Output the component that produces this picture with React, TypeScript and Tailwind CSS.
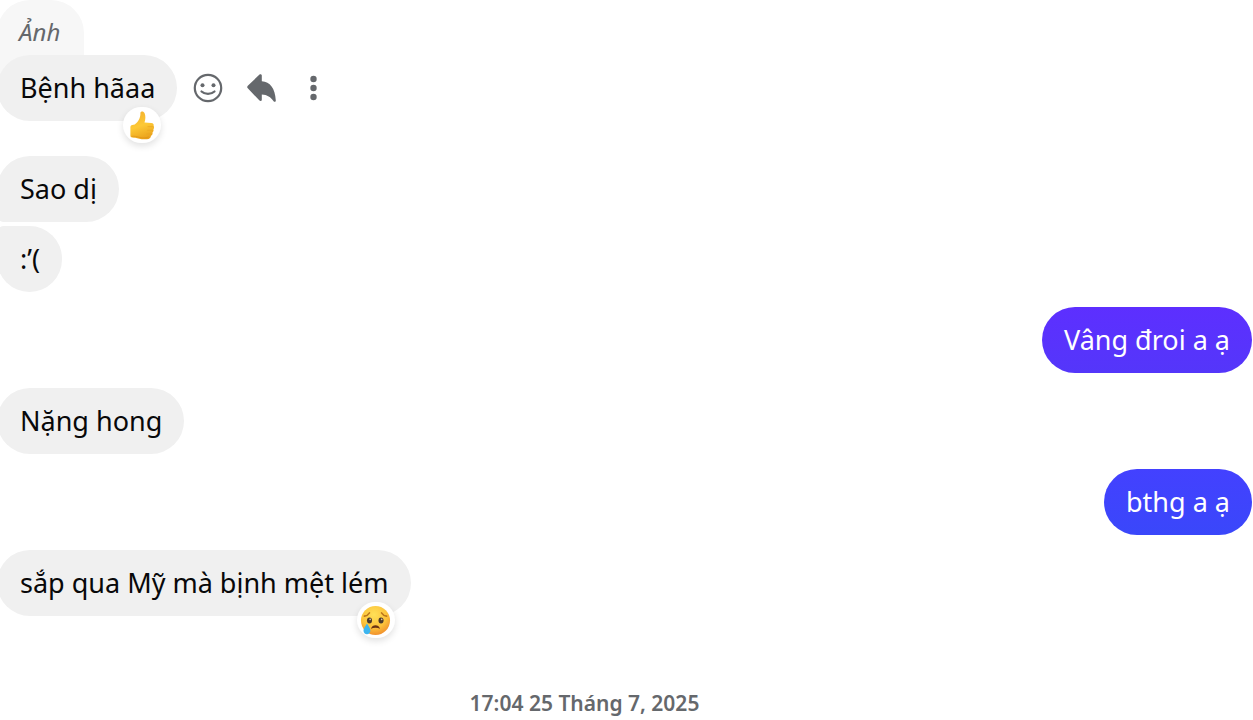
import type { ReactNode } from "react";

type BubbleProps = {
  children: ReactNode;
  shape?: string;
  reaction?: ReactNode;
};

const received = "relative flex h-[66px] items-center bg-[#f0f0f0] pr-[22px] pl-[23px] text-[#080809]";
const sent = "flex h-[66px] items-center self-end rounded-full px-[22px] text-white";

function Received({ children, shape = "rounded-full", reaction }: BubbleProps) {
  return (
    <div className={`${received} ${shape}`}>
      <p>{children}</p>
      {reaction}
    </div>
  );
}

function Reaction({ label, children }: { label: string; children: ReactNode }) {
  return (
    <button
      type="button"
      aria-label={label}
      className="absolute right-4 -bottom-[22px] flex h-9 w-[38px] items-center justify-center rounded-full bg-white shadow-[0_3px_7px_rgba(0,0,0,0.12)]"
    >
      {children}
    </button>
  );
}

function ThumbsUp() {
  return (
    <svg width="26" height="30" viewBox="0 0 26 30" aria-hidden="true">
      <defs>
        <linearGradient id="thumb" x1="0.3" y1="0" x2="0.6" y2="1">
          <stop offset="0" stopColor="#f4b32f" />
          <stop offset="0.5" stopColor="#fdc936" />
          <stop offset="1" stopColor="#e9a01b" />
        </linearGradient>
      </defs>
      <path
        d="M11.400 3c.1-1.800 3.200-2.100 4.200.2 1.200 2.800.9 6-.1 9.400l6.800.3c2 .1 2.800 1.500 2.300 3 .7 1 .6 2.400-.2 3.400.5 1.200 0 2.500-.9 3.200.4 1.300-.3 2.800-1.500 3.200-.2 2.200-1.700 3.400-4 3.600-3 .2-6-.1-8.700-.9-1.700-.5-2.700-.6-4.400-.7l-1.600-.1c-1.300-.1-1.900-.8-1.900-2v-8.300c0-1.200.6-1.900 1.900-2.200l2.400-.6c3.200-2.100 6-6.700 5.700-11.500z"
        fill="url(#thumb)"
      />
      <path d="M19 16.600h5M18.700 20.300h4.600M18 23.900h3.800" stroke="#e9a523" strokeWidth="0.7" strokeLinecap="round" />
      <path d="M2.500 26.300c3-.2 5 .2 8 1.100 3.500.9 7 .7 9.300-.6" fill="none" stroke="#dc8d15" strokeWidth="1" opacity="0.6" />
    </svg>
  );
}

function Crying() {
  return (
    <svg width="31" height="31" viewBox="0 0 32 32" aria-hidden="true">
      <defs>
        <radialGradient id="face" cx="0.45" cy="0.3" r="0.75">
          <stop offset="0" stopColor="#ffe057" />
          <stop offset="0.6" stopColor="#fcc23a" />
          <stop offset="1" stopColor="#ef882b" />
        </radialGradient>
      </defs>
      <circle cx="16" cy="16" r="15" fill="url(#face)" />
      <path d="M4.500 11.500c2-.2 4-1.300 5.300-3.400M27.500 11.500c-2-.2-4-1.300-5.300-3.400" fill="none" stroke="#bb751c" strokeWidth="1.600" strokeLinecap="round" />
      <ellipse cx="9.800" cy="16" rx="2.600" ry="3.100" fill="#49382b" />
      <ellipse cx="21.700" cy="16" rx="2.600" ry="3.100" fill="#49382b" />
      <circle cx="10.500" cy="14.800" r="0.900" fill="#dfc397" />
      <circle cx="22.400" cy="14.800" r="0.900" fill="#dfc397" />
      <path d="M11.200 24.500c1-2.600 2.700-3.700 4.800-3.700s3.800 1.100 4.800 3.700c-3-1.200-6.600-1.200-9.600 0z" fill="#693313" />
      <path d="M7.200 19c1.800 3 3.500 5 3.500 7.300 0 2.300-1.500 3.900-3.500 3.900s-3.600-1.600-3.600-3.900c0-2.200 1.900-4.200 3.600-7.300z" fill="#3db5ef" />
    </svg>
  );
}

function Actions() {
  return (
    <div className="ml-4 flex items-center gap-6 text-[#65686c]">
      <button type="button" aria-label="Bày tỏ cảm xúc">
        <svg width="30" height="30" viewBox="0 0 30 30" fill="none" aria-hidden="true">
          <circle cx="15" cy="15" r="13.200" stroke="currentColor" strokeWidth="2.200" />
          <circle cx="9.500" cy="12.300" r="2" fill="currentColor" />
          <circle cx="20.500" cy="12.300" r="2" fill="currentColor" />
          <path d="M8.500 18.500c3.500 3.200 9.500 3.200 13 0" stroke="currentColor" strokeWidth="2.200" strokeLinecap="round" />
        </svg>
      </button>
      <button type="button" aria-label="Trả lời">
        <svg width="30" height="30" viewBox="0 0 30 30" fill="currentColor" aria-hidden="true">
          <path d="M.8 12.700 12.500 1.600c1-.9 2.300-.4 2.300 1v5.600c8.300.8 13.200 6.600 14 19.200 0 1.600-1.400 1.900-2.200.8-2.900-4.200-6.300-6.400-11.800-6.700v5c0 1.500-1.300 2-2.300 1.100L.8 15.300c-.8-.8-.8-1.800 0-2.600z" />
        </svg>
      </button>
      <button type="button" aria-label="Xem thêm">
        <svg width="30" height="30" viewBox="0 0 30 30" fill="currentColor" aria-hidden="true">
          <circle cx="12.500" cy="6" r="3.200" />
          <circle cx="12.500" cy="15" r="3.200" />
          <circle cx="12.500" cy="24" r="3.200" />
        </svg>
      </button>
    </div>
  );
}

export default function App() {
  return (
    <main className="min-h-screen overflow-hidden bg-white font-['Segoe_UI','Noto_Sans',sans-serif] text-[27px] leading-9">
      <div className="-ml-[3px] flex flex-col items-start pr-px">
        <div className="h-[88px] rounded-t-[33px] bg-[#f7f7f7] pt-[14px] pr-6 pl-[22px] text-[24px] text-[#65686c] italic">
          Ảnh
        </div>
        <div className="-mt-[33px] flex items-center">
          <Received
            reaction={
              <Reaction label="Thích">
                <ThumbsUp />
              </Reaction>
            }
          >
            Bệnh hãaa
          </Received>
          <Actions />
        </div>
        <div className="mt-[35px] flex flex-col items-start gap-1">
          <Received shape="rounded-[33px] rounded-bl-[7px]">Sao dị</Received>
          <Received shape="rounded-[33px] rounded-tl-[7px]">:’(</Received>
        </div>
        <div className="mt-[15px] flex flex-col items-start gap-[15px] self-stretch">
          <div className={`${sent} bg-linear-to-b from-[#5d2fff] to-[#5436fa]`}>
            <p>Vâng đroi a ạ</p>
          </div>
          <Received>Nặng hong</Received>
          <div className={`${sent} bg-linear-to-b from-[#4341ff] to-[#3a47fa]`}>
            <p>bthg a ạ</p>
          </div>
          <Received
            reaction={
              <Reaction label="Buồn">
                <Crying />
              </Reaction>
            }
          >
            sắp qua Mỹ mà bịnh mệt lém
          </Received>
        </div>
        <time className="mt-[69px] self-stretch pr-[80px] text-center text-[21px] font-semibold text-[#65686c]">
          17:04 25 Tháng 7, 2025
        </time>
      </div>
    </main>
  );
}
